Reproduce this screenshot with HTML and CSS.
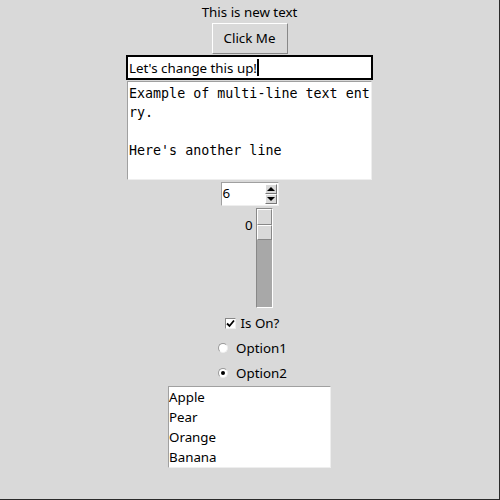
FILE: index.html
```html
<!DOCTYPE html>
<html>
<head>
<meta charset="utf-8">
<link rel="stylesheet" href="styles.css">
</head>
<body>
<div class="win">
  <div class="label">This is new text</div>
  <div class="button">Click Me</div>
  <div class="entry"><span>Let's change this up!</span><span class="caret"></span></div>
  <div class="text">Example of multi-line text ent<br>ry.<br><br>Here's another line</div>
  <div class="spin">
    <div class="spin-val">6</div>
    <div class="spin-btns">
      <div class="arrow up"><i></i></div>
      <div class="arrow down"><i></i></div>
    </div>
  </div>
  <div class="scale">
    <div class="scale-val">0</div>
    <div class="trough"><div class="slider"><div class="sl-half"></div><div class="sl-half"></div></div></div>
  </div>
  <div class="check"><span class="cbox"><svg width="9" height="9" viewBox="0 0 9 9"><path d="M1 4.5 L3.5 7 L8 1.5" fill="none" stroke="#000" stroke-width="1.8"/></svg></span><span>Is On?</span></div>
  <div class="radio r1"><span class="rdot"></span><span>Option1</span></div>
  <div class="radio r2"><span class="rdot on"></span><span>Option2</span></div>
  <div class="list">
    <div>Apple</div>
    <div>Pear</div>
    <div>Orange</div>
    <div>Banana</div>
  </div>
</div>
</body>
</html>
```

FILE: styles.css
```css
html, body { margin: 0; padding: 0; }
body { background: #d9d9d9; width: 500px; height: 500px; overflow: hidden; }
.win {
  box-sizing: border-box;
  width: 500px; height: 500px;
  border-right: 1px solid #2a2a2a;
  border-bottom: 1px solid #2a2a2a;
  display: flex; flex-direction: column; align-items: center;
  font-family: "Noto Sans", "DejaVu Sans", sans-serif;
  font-size: 13.33px; color: #000;
}
.label { margin-top: 3px; height: 19px; line-height: 19px; }
.button {
  box-sizing: border-box; margin-top: 1px;
  width: 76px; height: 31px; line-height: 28px; text-align: center;
  background: #d9d9d9;
  border: 1px solid; border-color: #fff #888 #888 #fff;
}
.entry {
  box-sizing: border-box; margin-top: 1px;
  width: 247px; height: 25px;
  border: 2px solid #000; background: #fff;
  padding-left: 1px; line-height: 20px;
  display: flex; align-items: center;
}
.caret { display: inline-block; width: 2px; height: 17px; background: #000; margin-left: 0px; }
.text {
  box-sizing: border-box; margin-top: 1px;
  width: 245px; height: 99px;
  border: 1px solid #a0a0a0; border-right-color: #eee; border-bottom-color: #eee;
  background: #fff;
  font-family: "DejaVu Sans Mono", monospace; font-size: 13.33px;
  line-height: 19px; padding: 2px 0 0 1px;
  white-space: nowrap;
}
.spin {
  box-sizing: border-box; margin-top: 2px;
  width: 58px; height: 24px;
  border: 1px solid #a0a0a0; border-right-color: #eee; border-bottom-color: #eee;
  background: #fff; display: flex;
}
.spin-val { flex: 1; padding-left: 1px; line-height: 21px; }
.spin-btns { width: 12px; margin: 1px 1px 1px 0; display: flex; flex-direction: column; }
.arrow {
  flex: 1; box-sizing: border-box; background: #d9d9d9;
  border: 1px solid; border-color: #fff #777 #777 #fff;
  display: flex; align-items: center; justify-content: center;
}
.arrow i { width: 0; height: 0; border-left: 4px solid transparent; border-right: 4px solid transparent; }
.up i { border-bottom: 4px solid #000; }
.down i { border-top: 4px solid #000; }
.scale { margin-top: 2px; display: flex; margin-left: 2px; }
.scale-val { width: 24px; text-align: right; line-height: 19px; padding-top: 8px; margin-right: 3px; }
.trough {
  box-sizing: border-box; width: 17px; height: 100px;
  background: #a8a8a8;
  border: 1px solid; border-color: #888 #fff #fff #888;
}
.slider { display: flex; flex-direction: column; width: 15px; height: 31px; }
.sl-half {
  flex: 1; box-sizing: border-box; background: #d9d9d9;
  border: 1px solid; border-color: #fff #888 #888 #fff;
}
.check { margin-top: 6px; display: flex; align-items: center; height: 18px; margin-left: 5px; }
.cbox {
  box-sizing: border-box; width: 11px; height: 11px; background: #fff;
  border: 1px solid; border-color: #888 #eee #eee #888;
  display: flex; align-items: center; justify-content: center; margin-right: 5px;
}
.radio { display: flex; align-items: center; height: 18px; margin-left: 6px; }
.r1 { margin-top: 7px; }
.r2 { margin-top: 7px; }
.rdot {
  box-sizing: border-box; width: 10px; height: 10px; border-radius: 50%;
  background: #fff; border: 1px solid; border-color: #999 #eee #eee #999;
  margin-right: 8px; position: relative;
}
.rdot.on::after {
  content: ""; position: absolute; left: 2px; top: 2px; width: 4px; height: 4px; border-radius: 50%; background: #000;
}
.list {
  box-sizing: border-box; margin-top: 4px;
  width: 163px; height: 82px;
  border: 1px solid #a0a0a0; border-right-color: #eee; border-bottom-color: #eee;
  background: #fff; padding-top: 0; padding-left: 0;
}
.list div { height: 20px; line-height: 20px; }
```
